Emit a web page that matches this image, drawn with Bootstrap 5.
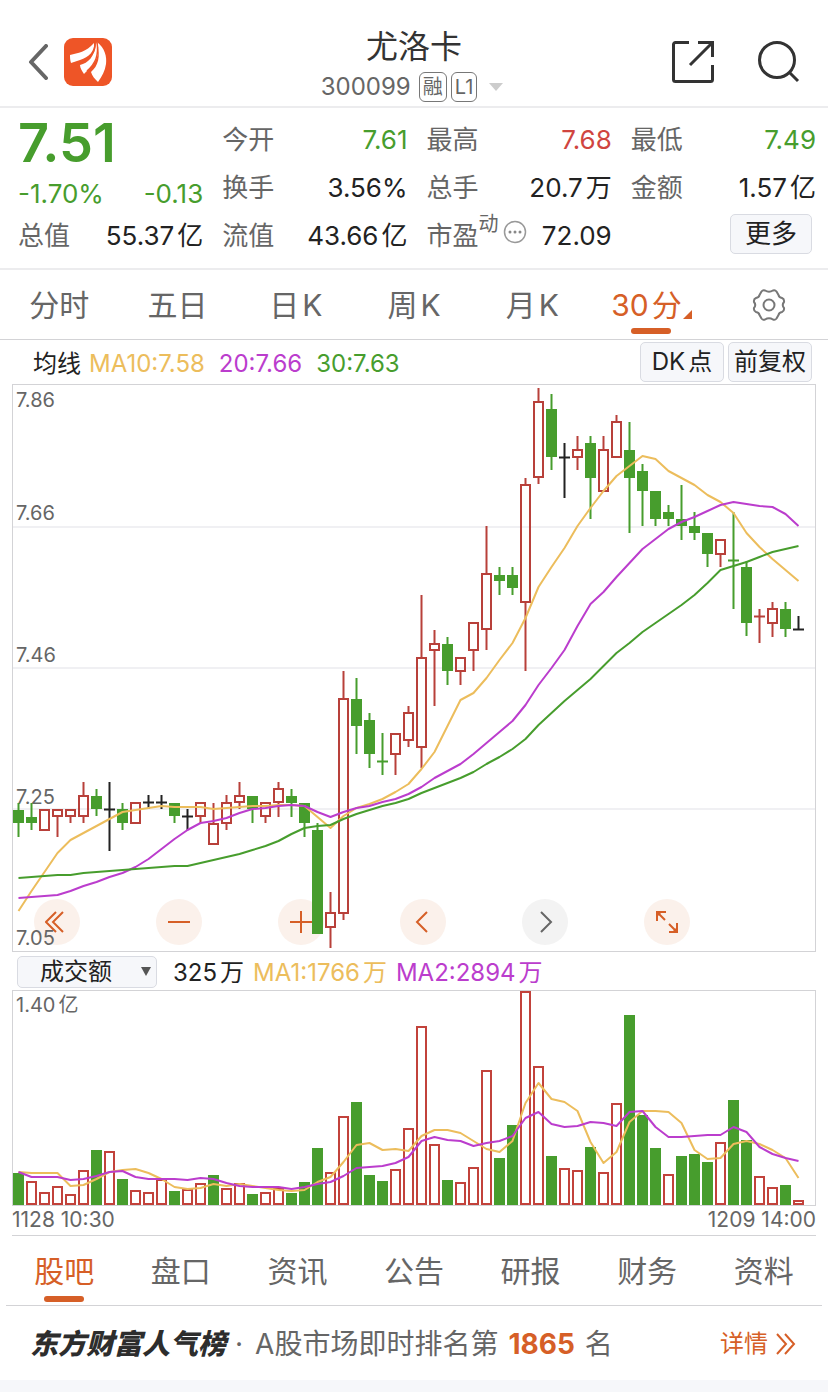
<!DOCTYPE html>
<html lang="zh-CN">
<head>
<meta charset="utf-8">
<meta name="viewport" content="width=device-width, initial-scale=1">
<title>尤洛卡 300099</title>
<link rel="stylesheet" href="https://cdn.jsdelivr.net/npm/bootstrap@5.3.0/dist/css/bootstrap.min.css">
<style>
  :root {
    --up: #b8403a; --down: #479d2d; --flat: #222; --accent: #d65f27;
    --ma-a: #ecbd5c; --ma-b: #bb3dcd; --rule: #d3d3d6; --soft: #ececee;
  }
  body { font-family: Inter, "Noto Sans CJK SC", sans-serif; color: #222; background: #f6f7fa; line-height: 1; }
  button { font-family: inherit; }
  .sheet { background: #fff; }
  .c-up { color: #d0453f; } .c-down { color: var(--down); } .c-accent { color: var(--accent); }
  .c-a { color: var(--ma-a); } .c-b { color: var(--ma-b); } .c-grey { color: #666; }
  .unit { margin-left: 3px; }

  .topbar { display: grid; grid-template-columns: 1fr auto 1fr; align-items: center; height: 108px; padding: 18px 28px 0; border-bottom: 2px solid var(--soft); }
  .plain { border: 0; background: none; padding: 0; display: block; }
  .stock-head { padding-top: 6px; }
  .stock-name { font-size: 32px; line-height: 44px; margin: 0; font-weight: 400; color: #333; }
  .stock-code { font-size: 24px; line-height: 32px; height: 36px; }
  .tag { border: 1px solid #777; border-radius: 6px; height: 30px; line-height: 28px; font-size: 20px; padding: 0 3px; }
  .actions { gap: 44px; }

  .quote { display: grid; grid-template-columns: repeat(4, 1fr); grid-auto-rows: 48px; column-gap: 19px; padding: 8px 12px 8px 18px; border-bottom: 2px solid var(--soft); font-size: 26px; }
  .quote > div { display: flex; justify-content: space-between; align-items: center; white-space: nowrap; }
  .quote dt { font-weight: 400; color: #666; }
  .quote dd, .quote dl { margin: 0; }
  .quote .price { font-size: 54px; font-weight: 600; padding-top: 6px; }
  .quote .change { padding-top: 12px; }
  .dyn { font-size: 20px; align-self: flex-start; padding-top: 2px; }
  .chip { border: 1px solid #d9dbe2; border-radius: 5px; background: #f6f7fa; color: #222; white-space: nowrap; padding: 0; }
  .chip-more { width: 82px; height: 40px; font-size: 26px; margin-bottom: 4px; }
  .chip-tool { width: 84px; height: 40px; font-size: 24px; }

  .tabs { display: grid; grid-template-columns: repeat(7, 1fr); height: 70px; border-bottom: 1px solid var(--rule); font-size: 30px; }
  .tabs a { position: relative; display: flex; align-items: center; justify-content: center; color: #666; text-decoration: none; white-space: nowrap; }
  .tabs a.on { color: var(--accent); }
  .tabs a.on::after { content: ""; position: absolute; left: calc(50% - 20px); bottom: 5px; width: 40px; height: 6px; border-radius: 3px; background: var(--accent); }
  .tabs a.has-menu { padding-right: 8px; }
  .tabs .corner { position: absolute; right: 18px; bottom: 20px; }
  .tabs-info { margin: 0 6px; }
  .tabs-info a.on::after { bottom: 3px; }

  .legend-row { height: 44px; padding: 0 16px 0 33px; font-size: 24px; white-space: nowrap; }
  .legend-text { gap: 14px; padding-top: 4px; }
  .panel { position: relative; margin: 0 12px; border: 1px solid var(--rule); }
  .panel svg.plot { display: block; width: 100%; height: auto; position: relative; pointer-events: none; }
  .plot text { font-size: 20px; fill: #666; }
  .controls { position: absolute; left: 21px; right: 125px; bottom: 6px; display: flex; justify-content: space-between; }
  .controls button { width: 46px; height: 46px; border: 0; padding: 0; border-radius: 50%; background: #fbf1eb; color: var(--accent); }
  .controls button.off { background: #f3f3f3; color: #666; }
  .controls svg { display: block; margin: 0 auto; }

  .vol-row { height: 38px; padding: 2px 17px 0; font-size: 24px; white-space: nowrap; }
  .vol-text { padding: 2px 0 0 16px; gap: 9px; }
  .vol-pick { position: relative; width: 140px; }
  .vol-pick select { appearance: none; width: 100%; height: 32px; font: inherit; line-height: 30px; padding: 0 0 0 22px; display: block; }
  .vol-pick svg { position: absolute; right: 6px; top: 11px; pointer-events: none; }
  .dates { margin: 0 12px; height: 30px; font-size: 21px; line-height: 28px; border-bottom: 1px solid var(--rule); }

  .rank { height: 74px; padding: 2px 32px 0 30px; font-size: 28px; white-space: nowrap; }
  .rank-title { font-weight: 900; font-style: italic; color: #2d2d2d; }
  .rank-dot { margin: 0 12px 0 9px; }
  .rank-no { margin: 0 10px; }
  .rank a { font-size: 24px; text-decoration: none; }
</style>
</head>
<body>
<main class="sheet">
  <header class="topbar">
    <div class="d-flex align-items-center gap-3">
      <button class="plain" type="button" aria-label="返回">
        <svg class="d-block" width="20" height="36" viewBox="0 0 20 36" fill="none" stroke="#666" stroke-width="4" stroke-linecap="round" stroke-linejoin="round"><path d="M18 2 3 18l15 16"/></svg>
      </button>
      <svg width="48" height="48" viewBox="0 0 48 48" aria-hidden="true">
        <rect width="48" height="48" rx="9" fill="#ee5527"/>
        <g fill="#fff">
          <path d="M6 17c8-2 16-3 24-12 1 8-5 14-14 17-3 1-6 2-9 3-1-3-1-6-1-8z"/>
          <path d="M16 27c8-2 15-8 16-23 5 8 1 19-5 25-2 2-5 5-7 7-2-3-4-6-4-9z"/>
          <path d="M33 4c8 6 10 15 9 22-1 7-4 12-8 18-3-3-6-6-7-10 7-6 10-15 6-30z"/>
        </g>
        <path d="M31 4c1 11-5 17-16 21M33 4c2 13-1 21-10 29" fill="none" stroke="#ee5527" stroke-width="1.500"/>
      </svg>
    </div>
    <div class="stock-head text-center">
      <h1 class="stock-name">尤洛卡</h1>
      <div class="stock-code d-flex align-items-center justify-content-center c-grey">
        <span class="me-2">300099</span><span class="tag me-1">融</span><span class="tag">L1</span>
        <svg class="ms-2" width="22" height="8" viewBox="0 0 22 8"><path d="M4 0h14l-7 8z" fill="#ccc"/></svg>
      </div>
    </div>
    <div class="actions d-flex justify-content-end align-items-center">
      <button class="plain" type="button" aria-label="分享">
        <svg class="d-block" width="42" height="42" viewBox="0 0 42 42" fill="none" stroke="#333" stroke-width="3"><path d="M17 1.500H3.500a2 2 0 0 0-2 2v35a2 2 0 0 0 2 2h35a2 2 0 0 0 2-2V24M26 1.500h14.500V16M40 2 18 24"/></svg>
      </button>
      <button class="plain" type="button" aria-label="搜索">
        <svg class="d-block" width="42" height="42" viewBox="0 0 42 42" fill="none" stroke="#333" stroke-width="3"><circle cx="19" cy="19" r="17.500"/><path d="m32 32 8 8"/></svg>
      </button>
    </div>
  </header>

  <dl class="quote mb-0">
    <div class="price c-down">7.51</div>
    <div><dt>今开</dt><dd class="c-down">7.61</dd></div>
    <div><dt>最高</dt><dd class="c-up">7.68</dd></div>
    <div><dt>最低</dt><dd class="c-down">7.49</dd></div>
    <div class="change c-down"><span>-1.70%</span><span>-0.13</span></div>
    <div><dt>换手</dt><dd>3.56%</dd></div>
    <div><dt>总手</dt><dd>20.7<span class="unit">万</span></dd></div>
    <div><dt>金额</dt><dd>1.57<span class="unit">亿</span></dd></div>
    <div><dt>总值</dt><dd>55.37<span class="unit">亿</span></dd></div>
    <div><dt>流值</dt><dd>43.66<span class="unit">亿</span></dd></div>
    <div>
      <dt class="d-flex align-items-center align-self-stretch">市盈<span class="dyn">动</span>
        <svg class="ms-1 mb-2" width="24" height="24" viewBox="0 0 24 24"><circle cx="12" cy="12" r="10.500" fill="none" stroke="#999" stroke-width="1.500"/><g fill="#888"><circle cx="7" cy="12" r="1.500"/><circle cx="12" cy="12" r="1.500"/><circle cx="17" cy="12" r="1.500"/></g></svg>
      </dt>
      <dd>72.09</dd>
    </div>
    <div class="justify-content-end pe-1"><button class="chip chip-more" type="button">更多</button></div>
  </dl>

  <nav class="tabs" aria-label="周期">
    <a href="#">分时</a><a href="#">五日</a><a href="#">日<span class="unit">K</span></a><a href="#">周<span class="unit">K</span></a><a href="#">月<span class="unit">K</span></a>
    <a href="#" class="on has-menu" aria-current="page">30<span class="unit">分</span><svg class="corner" width="9" height="9" viewBox="0 0 9 9"><path d="M9 0v9H0z" fill="#d65f27"/></svg></a>
    <a href="#" aria-label="设置"><svg width="34" height="34" viewBox="0 0 34 34" fill="none" stroke="#777" stroke-width="2" stroke-linejoin="round"><path d="M9.500 3.500Q11 1.500 13 2.500Q17 5 21 2.500Q23 1.500 24.500 3.500L26.500 7Q27 9.500 30 10Q32.500 11 32 14Q29.500 17 32 20Q32.500 23 30 24Q27 24.500 26.500 27L24.500 30.500Q23 32.500 21 31.500Q17 29 13 31.500Q11 32.500 9.500 30.500L7.500 27Q7 24.500 4 24Q1.500 23 2 20Q4.500 17 2 14Q1.500 11 4 10Q7 9.500 7.500 7Z"/><circle cx="17" cy="17" r="5.500"/></svg></a>
  </nav>

  <div class="legend-row d-flex align-items-center">
    <div class="legend-text d-flex"><span>均线<span class="c-a ms-2">MA10:7.58</span></span><span class="c-b">20:7.66</span><span class="c-down">30:7.63</span></div>
    <div class="ms-auto d-flex gap-1">
      <button class="chip chip-tool" type="button">DK<span class="unit">点</span></button>
      <button class="chip chip-tool" type="button">前复权</button>
    </div>
  </div>

  <section class="panel" aria-label="K线图">
    <div class="controls">
      <button type="button" aria-label="最早"><svg width="24" height="24" viewBox="0 0 24 24" fill="none" stroke="currentColor" stroke-width="2"><path d="M11 2 1 12l10 10M18 2 8 12l10 10"/></svg></button>
      <button type="button" aria-label="缩小"><svg width="24" height="24" viewBox="0 0 24 24" stroke="currentColor" stroke-width="2"><path d="M1 12h22"/></svg></button>
      <button type="button" aria-label="放大"><svg width="24" height="24" viewBox="0 0 24 24" stroke="currentColor" stroke-width="2"><path d="M1 12h22M12 1v22"/></svg></button>
      <button type="button" aria-label="向左"><svg width="24" height="24" viewBox="0 0 24 24" fill="none" stroke="currentColor" stroke-width="2"><path d="M16 2 6 12l10 10"/></svg></button>
      <button type="button" class="off" aria-label="向右"><svg width="24" height="24" viewBox="0 0 24 24" fill="none" stroke="currentColor" stroke-width="2"><path d="m8 2 10 10L8 22"/></svg></button>
      <button type="button" aria-label="全屏"><svg width="24" height="24" viewBox="0 0 24 24" fill="none" stroke="currentColor" stroke-width="2"><path d="M2 11V2h9M2 2l8 8M14 22h8v-9M22 22l-8-8"/><path d="M2 2h5L2 7zM22 22h-5l5-5z" fill="currentColor" stroke="none"/></svg></button>
    </div>
    <svg class="plot" id="kline" viewBox="0 385 802 566" role="img" aria-label="30分钟K线">
      <g stroke="#f0f0f3" stroke-width="2"><path d="M0 527h802M0 668h802M0 809h802"/></g>
      <text x="3" y="407">7.86</text><text x="3" y="520">7.66</text><text x="3" y="662">7.46</text><text x="3" y="804">7.25</text><text x="3" y="945">7.05</text>
    </svg>
  </section>

  <div class="vol-row d-flex align-items-center">
    <div class="vol-pick"><select class="chip" aria-label="指标"><option>成交额</option></select>
      <svg width="10" height="10" viewBox="0 0 10 10"><path d="M0 0h10L5 9z" fill="#555"/></svg></div>
    <div class="vol-text d-flex"><span>325<span class="unit">万</span></span><span class="c-a">MA1:1766<span class="unit">万</span></span><span class="c-b">MA2:2894<span class="unit">万</span></span></div>
  </div>

  <section class="panel" aria-label="成交额图">
    <svg class="plot" id="volume" viewBox="0 991 802 214" role="img" aria-label="成交额"><text x="3" y="1012">1.40<tspan dx="3">亿</tspan></text></svg>
  </section>
  <div class="dates d-flex justify-content-between c-grey"><span>1128 10:30</span><span>1209 14:00</span></div>

  <nav class="tabs tabs-info" aria-label="资料">
    <a href="#" class="on" aria-current="page">股吧</a><a href="#">盘口</a><a href="#">资讯</a><a href="#">公告</a><a href="#">研报</a><a href="#">财务</a><a href="#">资料</a>
  </nav>

  <div class="rank d-flex align-items-center c-grey">
    <span class="rank-title">东方财富人气榜</span><span class="rank-dot">·</span>
    <span>A股市场即时排名第</span><strong class="rank-no c-accent">1865</strong><span>名</span>
    <a href="#" class="ms-auto c-accent d-flex align-items-center gap-2">详情<svg width="20" height="22" viewBox="0 0 20 22" fill="none" stroke="currentColor" stroke-width="2"><path d="m1 1 9 10-9 10M9 1l9 10-9 10"/></svg></a>
  </div>
</main>

<script src="https://cdn.jsdelivr.net/npm/bootstrap@5.3.0/dist/js/bootstrap.bundle.min.js"></script>
<script>
  // One row per bar: kind (g down, r up, k flat), high, body top, body bottom, low, turnover bar top, turnover colour
  const bars = `g 803 810 823 837 1173 g|g 803 817 823 830 1181 r|r 809 809 831 831 1192 r|r 809 809 817 837 1186 r|r 809 809 817 823 1194 r
r 782 795 817 823 1170 r|g 789 796 809 816 1150 g|k 782 809 809 851 1151 r|g 803 809 823 830 1179 g|r 802 802 824 824 1190 r
k 795 802 802 809 1192 r|k 795 802 802 809 1179 r|g 803 803 816 823 1191 g|k 809 816 816 830 1189 r|r 802 802 817 823 1183 r
r 803 823 845 845 1175 g|r 795 802 824 830 1188 r|r 782 795 803 809 1183 r|g 796 796 809 823 1194 g|r 802 802 817 823 1192 r
r 782 788 803 817 1188 r|g 789 796 803 817 1193 g|g 803 803 823 837 1182 g|g 823 830 934 934 1148 g|r 892 912 928 948 1172 r
r 671 698 914 920 1116 r|g 678 699 726 754 1102 g|g 713 720 754 768 1175 g|g 733 761 761 775 1181 g|r 733 733 755 775 1169 r
r 706 712 741 747 1128 r|r 595 657 748 768 1026 r|r 630 643 651 706 1144 r|g 637 644 671 685 1180 g|r 657 657 672 685 1182 r
r 622 622 651 671 1167 r|r 526 573 630 650 1070 r|g 567 575 581 595 1158 g|g 567 575 588 595 1125 g|r 478 484 603 671 991 r
r 388 401 478 484 1066 r|g 394 409 457 470 1156 g|k 443 457 457 498 1168 r|r 436 449 458 470 1170 r|g 436 443 478 519 1147 g
r 436 449 492 492 1172 r|r 415 421 458 458 1103 r|g 422 450 478 533 1015 g|g 464 471 491 526 1115 g|g 491 491 519 526 1148 g
g 505 512 519 526 1174 r|g 485 519 526 540 1156 g|g 512 526 533 540 1154 g|g 533 533 554 567 1162 g|r 539 539 555 567 1142 r
g 512 560 560 609 1100 g|g 561 567 623 636 1140 g|r 609 616 616 643 1176 r|r 602 608 624 637 1187 r|g 602 609 629 637 1185 g
k 616 629 629 629 1200 r`.split(/[|\n]/).map(r => r.split(' '));

  const ma10 = [911,891,872,853,840,833,826,819,812,810,808,806,807,807,807,809,808,807,806,806,805,805,806,817,828,816,808,804,799,792,784,769,752,726,700,693,678,660,643,618,587,567,548,526,508,491,476,466,456,459,471,478,485,495,502,513,533,547,559,570,581];
  const ma20 = [898,897,896,895,891,886,882,877,873,867,859,849,839,830,823,821,818,813,809,808,806,805,806,812,817,812,808,806,802,799,794,787,778,771,764,754,743,732,721,705,685,668,650,626,604,592,577,563,549,539,529,522,517,511,505,502,504,506,507,514,526];
  const ma30 = [878,877,876,875,875,873,872,871,870,869,868,867,866,866,863,860,857,854,850,846,841,834,828,826,825,819,814,810,806,803,799,793,788,783,778,772,764,757,749,739,725,713,701,690,679,666,653,643,632,623,614,605,595,583,570,566,562,557,552,549,546];
  const va = [1172,1173,1173,1173,1186,1185,1179,1172,1170,1169,1173,1179,1187,1189,1188,1184,1186,1184,1186,1188,1190,1191,1190,1182,1177,1162,1145,1143,1150,1149,1151,1136,1130,1130,1133,1141,1149,1152,1141,1103,1083,1099,1102,1111,1142,1163,1152,1122,1111,1111,1112,1123,1150,1159,1158,1144,1141,1144,1150,1158,1178];
  const vb = [1172,1177,1177,1177,1180,1179,1176,1172,1171,1177,1179,1179,1179,1180,1178,1179,1183,1186,1187,1187,1187,1189,1187,1184,1182,1176,1168,1167,1166,1163,1157,1141,1137,1140,1141,1146,1143,1141,1136,1118,1112,1124,1127,1126,1122,1123,1126,1112,1111,1127,1137,1137,1136,1135,1135,1127,1132,1147,1154,1158,1161];

  const tone = { g: 'var(--down)', r: 'var(--up)', k: 'var(--flat)' };
  const cx = i => 5.5 + 13 * i;
  const line = (ys, c) => `<polyline fill="none" stroke="${c}" stroke-width="2" stroke-linejoin="round" points="${ys.map((y, i) => cx(i) + ',' + y).join(' ')}"/>`;
  const solid = (x, t, b, c) => `<rect x="${x - 5.5}" y="${t}" width="11" height="${b - t}" fill="${c}"/>`;
  const hollow = (x, t, b, c) => `<rect x="${x - 4.5}" y="${t + 1}" width="9" height="${b - t - 2}" fill="none" stroke="${c}" stroke-width="2"/>`;

  let k = '', v = '';
  bars.forEach((b, i) => {
    const x = cx(i), c = tone[b[0]], [hi, t, bt, lo, vt] = b.slice(1, 6).map(Number);
    k += `<path d="M${x} ${hi}V${t}M${x} ${bt}V${lo}" stroke="${c}" stroke-width="2"/>`;
    if (t === bt) k += `<path d="M${x - 5.5} ${t + .5}h11" stroke="${c}" stroke-width="2"/>`;
    else k += (b[0] === 'r' ? hollow : solid)(x, t, bt, c);
    v += (b[6] === 'r' ? hollow(x, vt, 1205, '#c2423b') : solid(x, vt, 1205, tone.g));
  });
  document.getElementById('kline').insertAdjacentHTML('beforeend', k + line(ma10, 'var(--ma-a)') + line(ma20, 'var(--ma-b)') + line(ma30, 'var(--down)'));
  document.getElementById('volume').insertAdjacentHTML('beforeend', v + line(va, 'var(--ma-a)') + line(vb, 'var(--ma-b)'));
</script>
</body>
</html>
